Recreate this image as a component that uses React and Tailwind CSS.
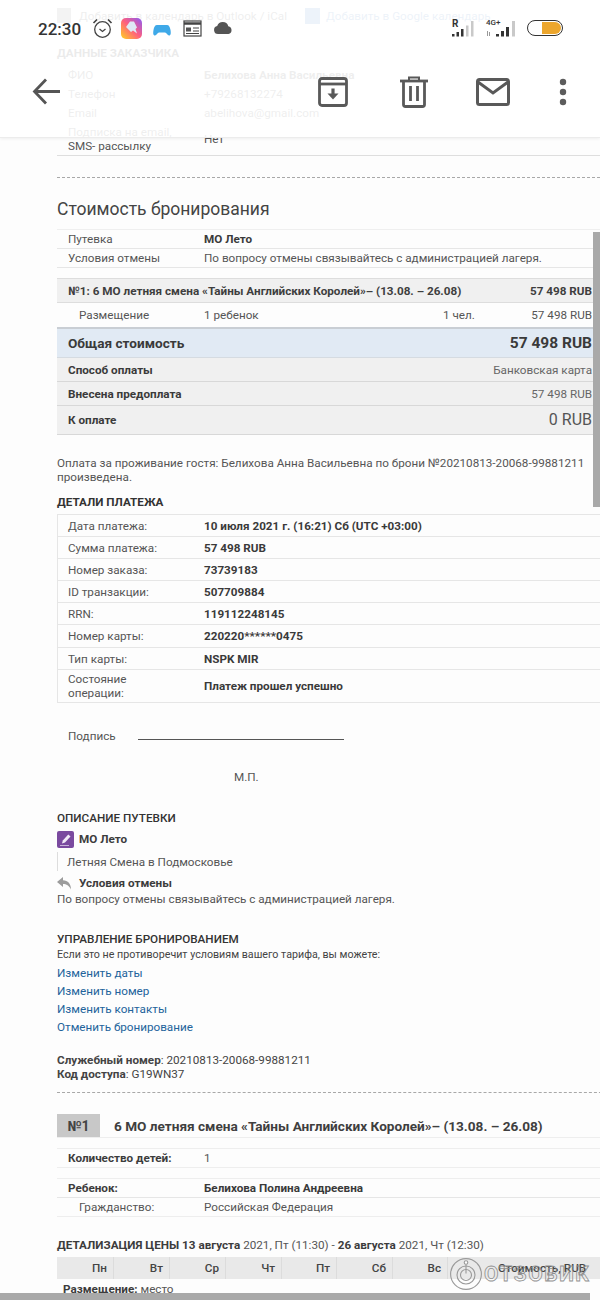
import React from "react";

const Row = ({ k, v, bold, h = "h-[22px]", kc = "" }) => (
  <div className={`flex items-center border-b border-[#e6e6e6] ${h}`}>
    <div className={`w-[147px] shrink-0 pl-[11px] leading-[14px] ${kc}`}>{k}</div>
    <div className={bold ? "font-bold text-[#3a3a3a]" : ""}>{v}</div>
  </div>
);

const Summary = ({ k, v, h, vc = "text-[#666]", cl = "border-[#d8d8d8]" }) => (
  <div className={`flex items-center justify-between bg-[#f0f0f0] border-b ${cl} pl-[11px] pr-[8px] ${h}`}>
    <span className="font-bold text-[#3a3a3a]">{k}</span>
    <span className={vc}>{v}</span>
  </div>
);

const Link = ({ children }) => <div className="h-[18px] leading-[18px] text-[#22639b]">{children}</div>;

const Hr = ({ className }) => <div className={`border-t border-dashed border-[#a8a8a8] ${className}`} />;

const Day = ({ children, w }) => (
  <div className={`flex items-center justify-end border-r border-[#dcdcdc] pr-[6px] font-medium ${w}`}>{children}</div>
);

function Header() {
  return (
    <div className="absolute left-0 top-0 h-[138px] w-full bg-white/[.9] border-b border-[#ececec] shadow-[0_1px_3px_rgba(0,0,0,.06)]">
      <div className="absolute left-[38px] top-[18px] text-[17px] font-medium leading-[22px] text-[#333]">22:30</div>
      <svg className="absolute left-[92px] top-[18px]" width="21" height="21" viewBox="0 0 21 21" fill="none" stroke="#444" strokeWidth="1.3">
        <circle cx="10.500" cy="11.500" r="7.800" />
        <path d="M7.500 11l3 2.500 3-2.500" />
        <path d="M1.500 5 5 1.500M19.500 5 16 1.500" strokeWidth="1.700" />
      </svg>
      <svg className="absolute left-[121px] top-[18px]" width="21" height="21" viewBox="0 0 21 21">
        <defs>
          <linearGradient id="appg" x1="0" y1="1" x2="1" y2="0">
            <stop offset="0" stopColor="#ffd21f" />
            <stop offset=".5" stopColor="#ff5f7e" />
            <stop offset="1" stopColor="#8a5cf5" />
          </linearGradient>
        </defs>
        <rect width="21" height="21" rx="5" fill="url(#appg)" />
        <path d="M9 3.500h4l3 6-1.500 1.500 1.500 4.500-4-3-2 1.500-5-5z" fill="#dfeaf5" />
      </svg>
      <svg className="absolute left-[153px] top-[24px]" width="18" height="12" viewBox="0 0 18 12">
        <path d="M4 1h10c2 0 3 2 3.500 5s.5 5.500-1.500 5.500c-1.500 0-2.500-3-4-3H6c-1.500 0-2.500 3-4 3C0 11.500 0 9 .5 6S2 1 4 1z" fill="#3fa9e8" />
      </svg>
      <svg className="absolute left-[183px] top-[20px]" width="19" height="17" viewBox="0 0 19 17" fill="none" stroke="#444" strokeWidth="1.200">
        <rect x="1" y="1" width="17" height="15" />
        <path d="M1 3.500h17" strokeWidth="2.500" />
        <path d="M10 8h6M10 11h6M3 13.500h13" />
        <rect x="3" y="7.500" width="5" height="4" fill="#555" stroke="none" />
      </svg>
      <svg className="absolute left-[213px] top-[22px]" width="20" height="12" viewBox="0 0 20 12">
        <path d="M5 12a4 4 0 0 1-.8-7.900A5.800 5.800 0 0 1 15.300 4.200 4 4 0 0 1 15.500 12z" fill="#555" />
      </svg>
      <div className="absolute left-[452px] top-[19px] text-[10px] font-bold leading-[10px] text-[#333]">R</div>
      <svg className="absolute left-[451px] top-[20px]" width="24" height="17" viewBox="0 0 24 17">
        <path d="M1 14h2.500v2.500H1z M5.500 12h2.500v4.500H5.500z M10 9h2.500v7.500H10z" fill="#333" />
        <path d="M15 5.500h2.500v11H15z M20 1h2.500v15.500H20z" fill="#c9c9c9" />
      </svg>
      <div className="absolute left-[486px] top-[18px] text-[8px] font-medium leading-[9px] text-[#333]">4G+</div>
      <svg className="absolute left-[486px] top-[20px]" width="32" height="17" viewBox="0 0 32 17">
        <path d="M1.500 11v5M3.500 16v-4" stroke="#999" strokeWidth="1" />
        <path d="M10 14h3v2.500h-3z M15 11h3v5.500h-3z M20 7h3v9.500h-3z" fill="#333" />
        <path d="M26 1h3v15.500h-3z" fill="#c9c9c9" />
      </svg>
      <div className="absolute left-[527px] top-[20px] flex h-[16px] w-[36px] items-center justify-end rounded-full border border-[#333] pr-[1px]">
        <div className="h-[12px] w-[19px] rounded-r-full rounded-l-[2px] bg-[#eca62d]" />
      </div>

      <svg className="absolute left-[32px] top-[78px]" width="29" height="27" viewBox="0 0 29 27" fill="none" stroke="#555" strokeWidth="2.800">
        <path d="M28 13.500H3M14 1.500 2.500 13.500 14 25.500" />
      </svg>
      <svg className="absolute left-[318px] top-[77px]" width="30" height="30" viewBox="0 0 30 30" fill="none" stroke="#595959" strokeWidth="2.800">
        <rect x="1.500" y="1.500" width="27" height="27" rx="2.500" />
        <path d="M1.500 7h27" />
        <path d="M15 11.500v8" strokeWidth="3.200" />
        <path d="M9.500 16.500h11L15 22.500z" fill="#595959" stroke="none" />
      </svg>
      <svg className="absolute left-[400px] top-[76px]" width="28" height="32" viewBox="0 0 28 32" fill="none" stroke="#595959" strokeWidth="2.800">
        <path d="M0 5h28" />
        <path d="M9 4V1.500h10V4" strokeWidth="2" />
        <path d="M3.500 5v23.500a2 2 0 0 0 2 2h17a2 2 0 0 0 2-2V5" />
        <path d="M10.500 10v15M17.500 10v15" />
      </svg>
      <svg className="absolute left-[476px] top-[78px]" width="34" height="28" viewBox="0 0 34 28" fill="none" stroke="#595959" strokeWidth="3">
        <rect x="1.500" y="1.500" width="31" height="25" rx="2" />
        <path d="M2 4l15 11L32 4" />
      </svg>
      <svg className="absolute left-[558px] top-[78px]" width="10" height="28" viewBox="0 0 10 28" fill="#5c5c5c">
        <circle cx="5" cy="4" r="3.200" />
        <circle cx="5" cy="14" r="3.200" />
        <circle cx="5" cy="24" r="3.200" />
      </svg>
    </div>
  );
}

export default function App() {
  return (
    <div className="relative h-[1300px] w-[600px] overflow-hidden bg-[#fdfdfd] font-['Roboto',sans-serif] text-[11.700px] leading-[16px] text-[#555]">
      <div className="ml-[57px] w-[560px]">
        <div className="flex h-[44px] items-start pt-[8px]">
          <span className="h-[15px] w-[14px] bg-[#8a8a8a]" />
          <span className="ml-[8px] w-[226px]">Добавить в календарь в Outlook / iCal</span>
          <span className="h-[16px] w-[15px] bg-[#4a86d0]" />
          <span className="ml-[6px] text-[#4a7fc0]">Добавить в Google календарь</span>
        </div>
        <div className="h-[18px] font-bold uppercase leading-[18px] text-[#333]">Данные заказчика</div>
        <div className="mt-[4px] border-b border-[#dedede]">
          <div className="flex h-[18px] items-center"><div className="w-[147px] pl-[11px]">ФИО</div><b>Белихова Анна Васильевна</b></div>
          <div className="flex h-[19px] items-center"><div className="w-[147px] pl-[11px]">Телефон</div>+79268132274</div>
          <div className="flex h-[19px] items-center"><div className="w-[147px] pl-[11px]">Email</div>abelihova@gmail.com</div>
          <div className="flex h-[33px] items-center"><div className="w-[147px] pl-[11px] leading-[14px]">Подписка на email,<br />SMS- рассылку</div><span>Нет</span></div>
        </div>
        <Hr className="mt-[21px] w-[543px]" />
        <div className="mt-[20px] h-[22px] text-[17.500px] leading-[22px] text-[#444]">Стоимость бронирования</div>

        <div className="mt-[9px] w-[543px] border-t border-[#efefef]">
          <Row k="Путевка" v="МО Лето" bold h="h-[19px]" />
          <Row k="Условия отмены" v="По вопросу отмены связывайтесь с администрацией лагеря." h="h-[19px]" />
        </div>

        <div className="mt-[10px] w-[543px]">
          <div className="flex h-[25px] items-center justify-between border-y border-[#dddddd] bg-[#f0f0f0] pl-[11px] pr-[8px] font-bold text-[#3e3e3e]">
            <span>№1: 6 МО летняя смена «Тайны Английских Королей»– (13.08. – 26.08)</span>
            <span>57 498 RUB</span>
          </div>
          <div className="flex h-[24px] items-center pl-[22px] pr-[8px]">
            <span className="w-[125px]">Размещение</span>
            <span className="w-[239px]">1 ребенок</span>
            <span className="w-[78px]">1 чел.</span>
            <span className="ml-auto">57 498 RUB</span>
          </div>
          <div className="flex h-[31px] items-center justify-between border-t-2 border-b border-t-[#c9ced4] border-b-[#d5dbe1] bg-[#e1eaf4] pl-[11px] pr-[8px] font-bold text-[#3a3a3a]">
            <span className="text-[13.600px]">Общая стоимость</span>
            <span className="text-[15.500px]">57 498 RUB</span>
          </div>
          <Summary k="Способ оплаты" v="Банковская карта" h="h-[24px]" />
          <Summary k="Внесена предоплата" v="57 498 RUB" h="h-[24px]" />
          <Summary k="К оплате" v="0 RUB" h="h-[29px]" vc="text-[16px] text-[#555]" />
        </div>

        <div className="mt-[21px] w-[543px] leading-[14px]">Оплата за проживание гостя: Белихова Анна Васильевна по брони №20210813-20068-99881211 произведена.</div>
        <div className="mt-[10px] h-[16px] font-bold uppercase text-[#333]">Детали платежа</div>

        <div className="mt-[4px] border-t border-[#e6e6e6] shadow-[inset_1px_0_0_#e6e6e6]">
          <Row k="Дата платежа:" v="10 июля 2021 г. (16:21) Сб (UTC +03:00)" bold />
          <Row k="Сумма платежа:" v="57 498 RUB" bold />
          <Row k="Номер заказа:" v="73739183" bold />
          <Row k="ID транзакции:" v="507709884" bold />
          <Row k="RRN:" v="119112248145" bold />
          <Row k="Номер карты:" v="220220******0475" bold h="h-[23px]" />
          <Row k="Тип карты:" v="NSPK MIR" bold />
          <Row k={<>Состояние<br />операции:</>} v="Платеж прошел успешно" bold h="h-[33px]" />
        </div>

        <div className="mt-[25px] flex items-end pl-[11px]">
          <span className="w-[70px]">Подпись</span>
          <span className="mb-[4px] h-0 w-[206px] border-t border-[#555]" />
        </div>
        <div className="mt-[25px] pl-[177px]">М.П.</div>

        <div className="mt-[25px] h-[16px] font-medium uppercase text-[#333]">Описание путевки</div>
        <div className="mt-[4px] flex h-[18px] items-center gap-[5px] font-bold text-[#3c3c3c]">
          <svg width="17" height="17" viewBox="0 0 17 17">
            <rect width="17" height="17" rx="2" fill="#7a4a9f" />
            <path d="M5 12.500l.8-3 5.500-6 2.200 2-5.500 6z" fill="#f2ebf7" />
            <path d="M3 14.500h9" stroke="#c9b3da" strokeWidth="1" />
          </svg>
          МО Лето
        </div>
        <div className="mt-[4px] flex h-[19px] items-center border-l border-[#dddddd] pl-[9px] text-[#555]">Летняя Смена в Подмосковье</div>
        <div className="mt-[4px] flex h-[16px] items-center gap-[7px] font-bold text-[#3c3c3c]">
          <svg width="15" height="13" viewBox="0 0 15 13">
            <path d="M6 0 0 5l6 5V7c3.500 0 6 1.500 8 5.500C14 7 11 3.500 6 3.300z" fill="#9c9c9c" />
          </svg>
          Условия отмены
        </div>
        <div className="h-[16px] text-[#555]">По вопросу отмены связывайтесь с администрацией лагеря.</div>

        <div className="mt-[24px] h-[16px] font-medium uppercase text-[#333]">Управление бронированием</div>
        <div className="h-[16px] text-[10.700px] text-[#444]">Если это не противоречит условиям вашего тарифа, вы можете:</div>
        <div className="mt-[1px]">
          <Link>Изменить даты</Link>
          <Link>Изменить номер</Link>
          <Link>Изменить контакты</Link>
          <Link>Отменить бронирование</Link>
        </div>
        <div className="mt-[17px] leading-[14px] text-[#444]">
          <div><b>Служебный номер</b>: 20210813-20068-99881211</div>
          <div><b>Код доступа</b>: G19WN37</div>
        </div>

        <Hr className="mt-[11px]" />

        <div className="mt-[21px] flex h-[24px] items-center gap-[14px] border-b border-[#eeeeee]">
          <div className="flex h-full w-[43px] items-center justify-center bg-[#c8c8c8] text-[14px] font-bold text-[#444]">№1</div>
          <div className="text-[13.600px] font-bold text-[#3f3f3f]">6 МО летняя смена «Тайны Английских Королей»– (13.08. – 26.08)</div>
        </div>

        <div className="mt-[10px] flex h-[20px] items-center border-y border-[#eeeeee]">
          <b className="w-[147px] pl-[11px] text-[#3c3c3c]">Количество детей:</b>1
        </div>
        <div className="mt-[10px] border-t border-[#eeeeee]">
          <Row k={<b className="text-[#3c3c3c]">Ребенок:</b>} v="Белихова Полина Андреевна" bold h="h-[19px]" />
          <div className="flex h-[19px] items-center border-b border-[#eeeeee]">
            <div className="w-[147px] pl-[22px]">Гражданство:</div>Российская Федерация
          </div>
        </div>

        <div className="mt-[20px] h-[16px] text-[#555]">
          <b className="text-[#3c3c3c]">ДЕТАЛИЗАЦИЯ ЦЕНЫ 13 августа</b> 2021, Пт (11:30) - <b className="text-[#3c3c3c]">26 августа</b> 2021, Чт (12:30)
        </div>
        <div className="mt-[4px] flex h-[22px] bg-[#e9e9e9] text-[#444]">
          <Day w="w-[57px]">Пн</Day>
          <Day w="w-[56px]">Вт</Day>
          <Day w="w-[56px]">Ср</Day>
          <Day w="w-[56px]">Чт</Day>
          <Day w="w-[55px]">Пт</Day>
          <Day w="w-[56px]">Сб</Day>
          <Day w="w-[55px]">Вс</Day>
          <div className="flex w-[150px] items-center whitespace-nowrap pl-[50px] font-medium">Стоимость, RUB</div>
        </div>
        <div className="mt-[2px] pl-[6px]"><b className="text-[#3c3c3c]">Размещение:</b> место</div>
      </div>

      <Header />

      <div className="absolute right-0 top-[232px] h-[275px] w-[7px] bg-[#a9a9a9]" />
      <div className="absolute bottom-0 left-0 h-[7px] w-[590px] bg-[#a9a9a9]" />

      <div className="absolute left-[450px] top-[1258px] flex items-center">
        <svg width="32" height="32" viewBox="0 0 32 32" fill="none" stroke="#999" strokeWidth="1.100">
          <circle cx="16" cy="16" r="15.400" />
          <circle cx="16" cy="17" r="9" />
          <circle cx="16" cy="17" r="5.500" />
          <circle cx="16" cy="4.500" r="1.800" fill="#fdfdfd" />
          <path d="M16 6.500v9" />
        </svg>
        <span className="ml-[2px] text-[21px] font-bold leading-[21px] tracking-[1.500px] text-transparent [-webkit-text-stroke:0.8px_#8f8f8f]">ОТЗОВИК</span>
      </div>
    </div>
  );
}
